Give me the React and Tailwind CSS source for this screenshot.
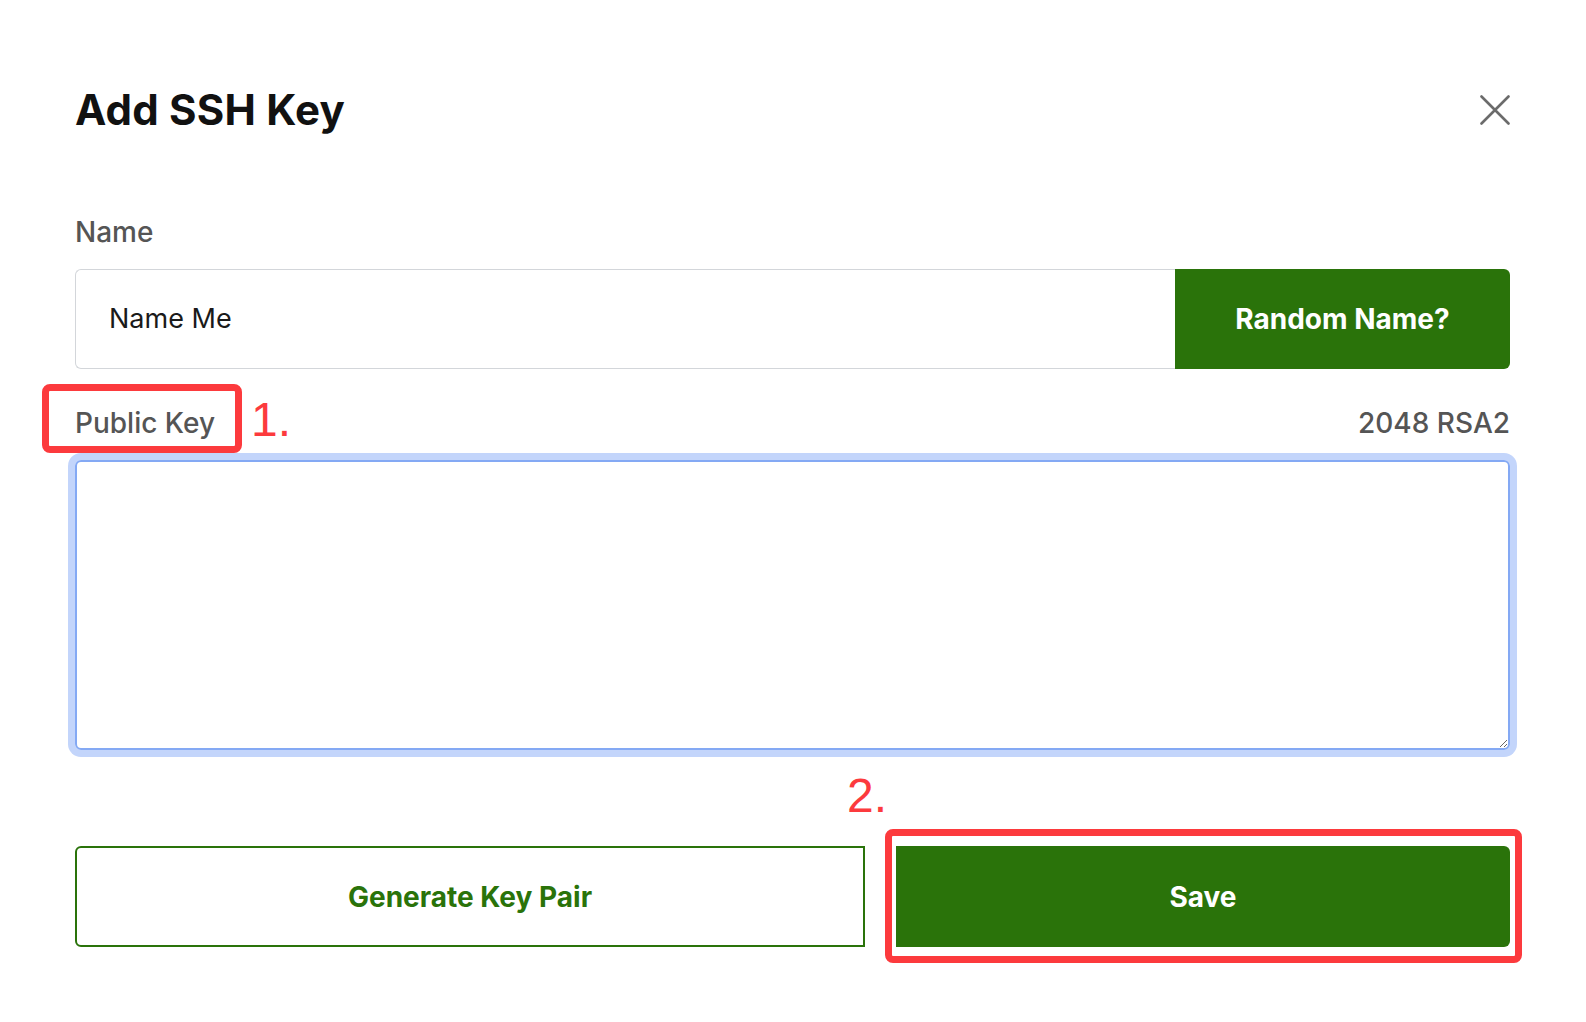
import React from 'react';

// Add SSH Key dialog with two annotation boxes
const GREEN = 'bg-[#2a730a]';

function CloseIcon() {
    return (
        <svg width="30" height="30" viewBox="0 0 30 30" fill="none">
            <path d="M1.5 1.5 L28.5 28.5 M28.5 1.5 L1.5 28.5" stroke="#6b6b6b" strokeWidth="2.6" strokeLinecap="round" />
        </svg>
    );
}

export default function App() {
    return (
        <div className="min-h-screen bg-white font-['Inter',sans-serif] pl-[75px] pr-[76px] pt-[86px]">
            {/* Header */}
            <div className="flex items-center justify-between h-[48px]">
                <h1 className="text-[42px] font-bold leading-[48px] text-[#111111] tracking-[0.2px]">Add SSH Key</h1>
                <button className="w-[30px] h-[30px] flex items-center justify-center" title="Close">
                    <CloseIcon />
                </button>
            </div>

            {/* Name */}
            <div className="mt-[81px] text-[28px] font-medium leading-[34px] text-[#555555]">Name</div>
            <div className="mt-[20px] flex h-[100px]">
                <input
                    defaultValue="Name Me"
                    className="flex-1 min-w-0 border border-r-0 border-[#d3d6da] rounded-l-md pl-[33px] text-[27px] text-[#1a1a1a] outline-none font-['Inter',sans-serif]"
                />
                <button className={`w-[335px] ${GREEN} rounded-r-md text-white text-[28px] font-bold`}>
                    Random Name?
                </button>
            </div>

            {/* Public key */}
            <div className="mt-[37px] flex items-center justify-between h-[34px]">
                <span className="relative text-[28px] font-medium leading-[34px] text-[#555555]">
                    Public Key
                    <span className="absolute left-[-33px] top-[-22px] w-[200px] h-[69px] border-[7px] border-[#fc3a3d] rounded-[8px]"></span>
                    <span className="absolute left-[176px] top-[-10px] text-[48px] leading-[48px] text-[#fc3a3d] font-['Liberation_Sans',sans-serif] whitespace-nowrap">1.</span>
                </span>
                <span className="text-[28px] font-medium leading-[34px] text-[#555555]">2048 RSA2</span>
            </div>
            <textarea
                className="mt-[20px] block w-full h-[290px] border-2 border-[#84a9f4] rounded-md shadow-[0_0_0_7px_#c3d5fb] outline-none resize-y p-3 text-[20px]"
            ></textarea>

            {/* Actions */}
            <div className="mt-[96px] flex gap-[31px] h-[101px]">
                <button className="w-[790px] border-2 border-[#2a730a] rounded-l-md text-[#2a730a] text-[28px] font-bold">
                    Generate Key Pair
                </button>
                <div className="relative flex-1">
                    <button className={`w-full h-full ${GREEN} rounded-r-md text-white text-[28px] font-bold`}>
                        Save
                    </button>
                    <span className="absolute left-[-11px] right-[-12px] top-[-17px] bottom-[-16px] border-[7px] border-[#fc3a3d] rounded-[8px] pointer-events-none"></span>
                    <span className="absolute left-[-49px] top-[-74px] text-[48px] leading-[48px] text-[#fc3a3d] font-['Liberation_Sans',sans-serif]">2.</span>
                </div>
            </div>
        </div>
    );
}
